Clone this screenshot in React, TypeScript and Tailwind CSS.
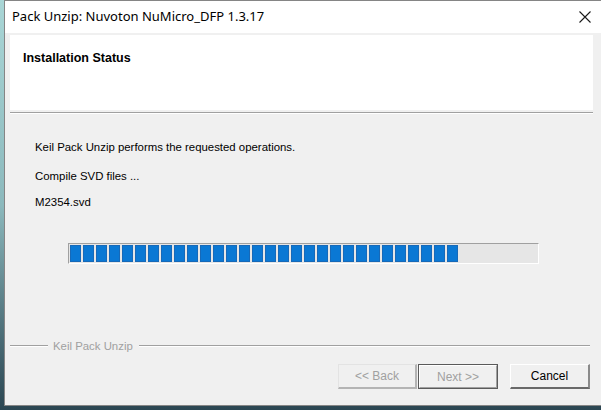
const segments = Array.from({ length: 30 }, (_, i) => i);

const CloseIcon = () => (
  <svg width="12" height="12" viewBox="0 0 12 12" className="block">
    <path d="M0.5 0.5 L11.5 11.5 M11.5 0.5 L0.5 11.5" stroke="#1a1a1a" strokeWidth="1.1" fill="none" />
  </svg>
);

const WinButton = ({ label, disabled = false, isDefault = false }: { label: string; disabled?: boolean; isDefault?: boolean }) => {
  if (isDefault) {
    return (
      <div className="w-[80px] h-[25px] border border-[#5a5a5a] bg-[#f0f0f0] flex">
        <div className="flex-1 border-t border-l border-white border-b border-r border-b-[#a0a0a0] border-r-[#a0a0a0] flex items-center justify-center text-[12px] text-[#a0a0a0]">
          {label}
        </div>
      </div>
    );
  }
  return (
    <div
      className={
        disabled
          ? "w-[79px] h-[25px] bg-[#f0f0f0] border-t border-l border-[#e3e3e3] border-b-2 border-r-2 border-b-[#b4b4b4] border-r-[#b4b4b4] flex items-center justify-center text-[12px] text-[#a0a0a0]"
          : "w-[80px] h-[25px] bg-[#f0f0f0] border-t border-l border-white border-b-2 border-r-2 border-b-[#696969] border-r-[#8a8a8a] flex items-center justify-center text-[12px] text-black"
      }
    >
      {label}
    </div>
  );
};

export default function App() {
  return (
    <div
      className="w-[601px] h-[410px] overflow-hidden flex pl-[4px] pb-[4px] bg-gradient-to-b from-[#a9d6d6] via-[#8cb9bd] to-[#2b4652]"
      style={{ fontFamily: '"Liberation Sans", Arial, sans-serif' }}
    >
      <div className="flex-1 flex flex-col bg-[#f0f0f0] border-t border-l border-b border-[#858585]">
        {/* title bar */}
        <div className="h-[32px] bg-white flex items-center justify-between pl-[7px] pr-[10px]">
          <span className="text-[13px] text-black" style={{ fontFamily: '"Noto Sans", "Open Sans", sans-serif' }}>
            Pack Unzip: Nuvoton NuMicro_DFP 1.3.17
          </span>
          <CloseIcon />
        </div>

        {/* header panel */}
        <div className="mt-[2px] ml-[5px] mr-[8px] h-[75px] bg-white pl-[13px] pt-[16px]">
          <div className="text-[12.5px] leading-[14px] font-bold text-black">Installation Status</div>
        </div>
        <div className="mt-[2px] ml-[5px] mr-[8px] h-[2px] border-t border-[#a0a0a0] border-b border-b-white" />

        {/* body */}
        <div className="pl-[30px] text-[11.4px] leading-[14px] text-black">
          <div className="mt-[26px]">Keil Pack Unzip performs the requested operations.</div>
          <div className="mt-[15px]">Compile SVD files ...</div>
          <div className="mt-[12px]">M2354.svd</div>
        </div>

        {/* progress bar */}
        <div className="mt-[34px] ml-[63px] w-[471px] h-[21px] bg-[#e6e6e6] border-t border-l border-[#a0a0a0] border-b border-r border-b-white border-r-white p-[1px] flex gap-[2px]">
          {segments.map((i) => (
            <div key={i} className="w-[11px] h-[17px] bg-[#0a78d4] border border-[#1769b8]" />
          ))}
        </div>

        {/* group line */}
        <div className="mt-[75px] ml-[5px] mr-[11px] flex items-center gap-[5px]">
          <div className="w-[38px] h-[2px] border-t border-[#a0a0a0] border-b border-b-white" />
          <span className="text-[11.4px] leading-[14px] text-[#a0a0a0]">Keil Pack Unzip</span>
          <div className="flex-1 ml-[1px] h-[2px] border-t border-[#a0a0a0] border-b border-b-white" />
        </div>

        {/* buttons */}
        <div className="mt-[11px] pr-[11px] flex justify-end">
          <WinButton label="<< Back" disabled />
          <div className="ml-[1px]">
            <WinButton label="Next >>" isDefault />
          </div>
          <div className="ml-[12px]">
            <WinButton label="Cancel" />
          </div>
        </div>
      </div>
    </div>
  );
}
